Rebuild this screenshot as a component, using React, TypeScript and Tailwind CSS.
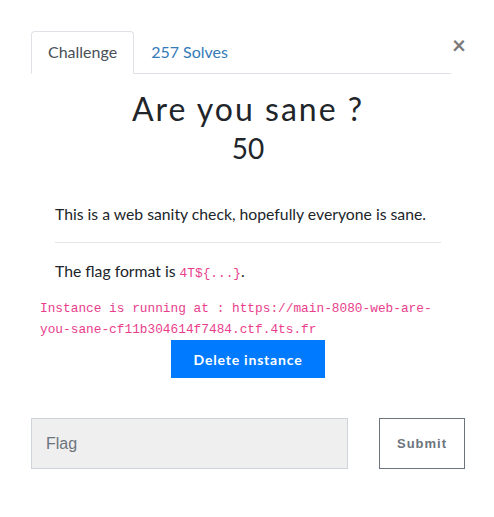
export default function App() {
  return (
    <div className="min-h-[517px] bg-white pl-[31px] pr-[29px] pt-[31px] font-['Lato','Noto_Sans',sans-serif] text-[#212529]">
      {/* tab header with close */}
      <div className="flex items-start">
        <div className="flex w-[420px] border-b border-[#dee2e6]">
          <div className="-mb-px rounded-t border border-[#dee2e6] border-b-white bg-white px-4 py-2 text-base leading-6 text-[#495057]">
            Challenge
          </div>
          <div className="border border-transparent px-4 py-2 text-base leading-6 text-[#337ab7]">
            257 Solves
          </div>
        </div>
        <button className="ml-px mt-[2px] w-[13px] text-center text-[24px] leading-6 font-bold text-[#7a7a7a]">
          ×
        </button>
      </div>

      <h2 className="mt-4 text-center text-[32px] leading-[38px] tracking-[2px] font-normal text-[#212529]">
        Are you sane ?
      </h2>
      <h3 className="mt-[3px] text-center text-[28px] leading-[34px] font-normal">50</h3>

      <div className="mx-6 mt-[37px]">
        <p className="text-[15.75px] leading-6">This is a web sanity check, hopefully everyone is sane.</p>
        <hr className="my-[16px] border-t border-[#e6e6e6]" />
        <p className="text-[15.75px] leading-6">
          The flag format is{' '}
          <code className="font-['Liberation_Mono',monospace] text-[12.8px] text-[#e83e8c]">4T${'{...}'}</code>.
        </p>
      </div>

      <div className="mt-[12px] pl-[9px] font-['Liberation_Mono',monospace] text-[12.8px] leading-[21px] text-[#e83e8c]">
        Instance is running at : https://main-8080-web-are-
        <br />
        you-sane-cf11b304614f7484.ctf.4ts.fr
      </div>

      <div className="flex justify-center">
        <button className="h-[38px] w-[154px] bg-[#007bff] text-[14px] font-bold tracking-[0.8px] text-white">
          Delete instance
        </button>
      </div>

      <div className="mt-[40px] flex items-start">
        <input
          placeholder="Flag"
          className="h-[51px] w-[317px] border border-[#ced4da] bg-[#efefef] px-[14px] font-['Liberation_Sans',Arial,sans-serif] text-base text-[#495057] placeholder:text-[#6c757d] outline-none"
        />
        <button className="ml-auto h-[51px] w-[86px] border border-[#6c757d] bg-white font-['Liberation_Sans',Arial,sans-serif] text-[13px] font-bold tracking-[1px] text-[#6c757d]">
          Submit
        </button>
      </div>
    </div>
  );
}
